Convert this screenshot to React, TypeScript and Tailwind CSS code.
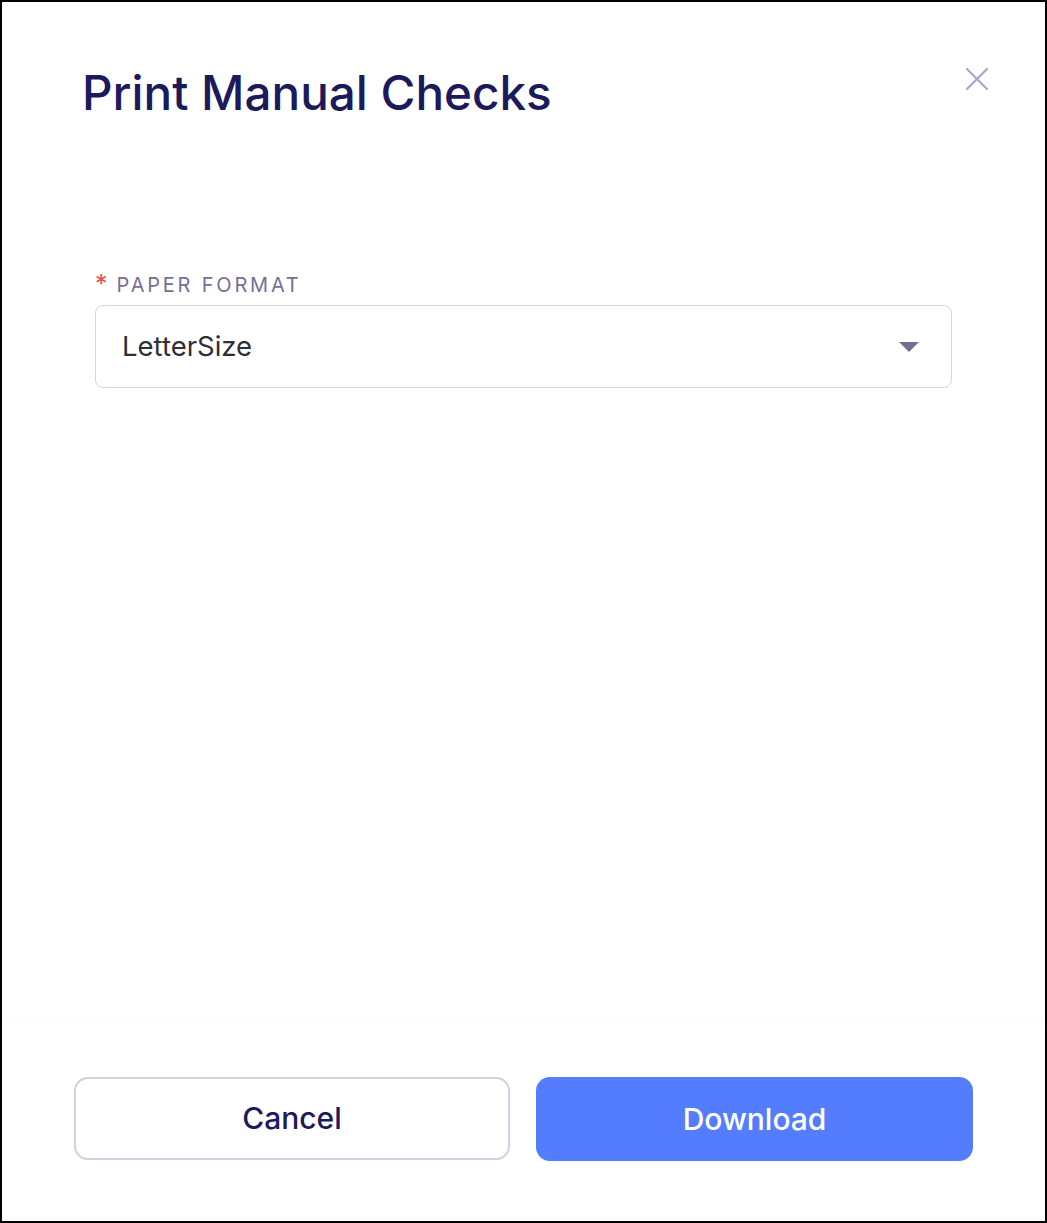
const font = { fontFamily: 'Inter, "Noto Sans", sans-serif' };

export default function App() {
    return (
        <div style={font} className="w-[1047px] h-[1223px] bg-white border-2 border-black flex flex-col">
            {/* Header */}
            <div className="flex items-start justify-between pl-[80px] pr-[57px] pt-[63px]">
                <h1 className="text-[47.6px] leading-[56px] font-medium text-[#1c1a5c]">
                    Print Manual Checks
                </h1>
                <button className="mt-[3px] text-[#aba6c9]">
                    <svg width="22" height="22" viewBox="0 0 22 22" fill="none" stroke="currentColor" strokeWidth="2.2" strokeLinecap="round">
                        <path d="M1 1l20 20M21 1L1 21" />
                    </svg>
                </button>
            </div>

            {/* Form */}
            <div className="flex-1 px-[93px] pt-[152px]">
                <label className="flex items-start gap-[9px] text-[20px] leading-[24px] tracking-[2.8px] text-[#756f98]">
                    <span className="text-[#f04a4a] text-[25px] leading-[22px] tracking-normal">*</span>
                    PAPER FORMAT
                </label>
                <div className="mt-[8px] h-[83px] border border-[#d3d5e2] rounded-[8px] flex items-center justify-between pl-[26px] pr-[32px]">
                    <span className="text-[27.5px] text-[#2e2e33]">LetterSize</span>
                    <svg width="20" height="10" viewBox="0 0 20 10" className="text-[#756d96]">
                        <path d="M0 0h20L10 10z" fill="currentColor" />
                    </svg>
                </div>
            </div>

            {/* Footer */}
            <div className="shadow-[0_-6px_10px_rgba(0,0,0,0.015)] flex gap-[26px] px-[72px] pt-[52px] pb-[60px]">
                <button className="w-[436px] h-[83px] rounded-[14px] border-2 border-[#d2cfe2] text-[30px] font-medium text-[#1c1a5c]">
                    Cancel
                </button>
                <button className="w-[437px] h-[84px] rounded-[14px] bg-[#537dfd] text-[30px] font-medium text-white">
                    Download
                </button>
            </div>
        </div>
    );
}
